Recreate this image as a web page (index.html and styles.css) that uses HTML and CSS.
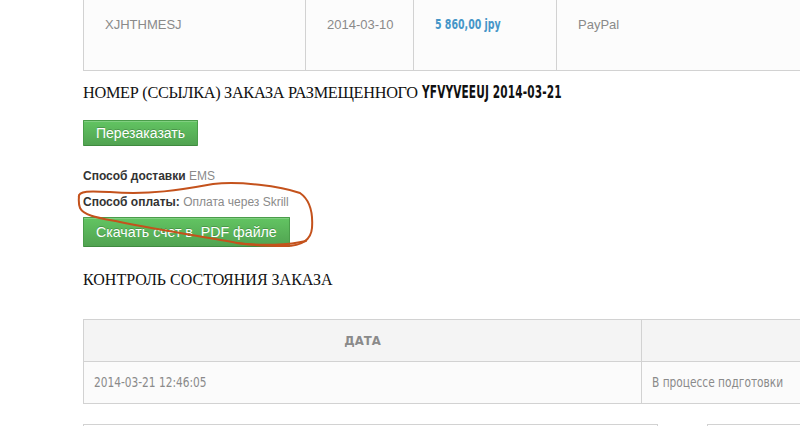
FILE: index.html
```html
<!DOCTYPE html>
<html lang="ru">
<head>
<meta charset="utf-8">
<link rel="stylesheet" href="styles.css">
</head>
<body>
<div class="page">
  <table class="orders">
    <tr>
      <td class="c-num">XJHTHMESJ</td>
      <td class="c-date">2014-03-10</td>
      <td class="c-sum"><span class="price">5 860,00 jpy</span></td>
      <td class="c-pay">PayPal</td>
    </tr>
  </table>

  <h2 class="title">НОМЕР (ССЫЛКА) ЗАКАЗА РАЗМЕЩЕННОГО <span class="code">YFVYVEEUJ 2014-03-21</span></h2>

  <div class="btn-row"><a class="btn btn-small">Перезаказать</a></div>

  <p class="info first"><b>Способ доставки</b> <span>EMS</span></p>
  <p class="info"><b>Способ оплаты:</b> <span>Оплата через Skrill</span></p>
  <div class="btn-row"><a class="btn btn-big">Скачать счет в&nbsp; PDF файле</a></div>

  <h2 class="title2">КОНТРОЛЬ СОСТОЯНИЯ ЗАКАЗА</h2>

  <table class="status">
    <tr class="head">
      <th class="s-date"><span class="th-text">ДАТА</span></th>
      <th class="s-state"></th>
    </tr>
    <tr>
      <td><span class="cell-text">2014-03-21 12:46:05</span></td>
      <td><span class="cell-text">В процессе подготовки</span></td>
    </tr>
  </table>

  <div class="bottom">
    <div class="box box-a"></div>
    <div class="box box-b"></div>
  </div>
</div>

<svg class="scribble" width="800" height="426" viewBox="0 0 800 426">
  <path d="M79,198 C77,190 92,191 110,192 C150,195 180,190 213,184 C240,181 280,186 300,193 C310,200 313,214 312,228 C311,240 302,246 285,246 C265,246 250,245 237,243 C205,237 165,231 120,222 C100,218 84,216 80,208 C78,203 79,198 79,195"
        fill="none" stroke="#c4521c" stroke-width="2" stroke-linecap="round" stroke-linejoin="round"/>
  <path d="M237,243 C260,246 290,245 306,241" fill="none" stroke="#c4521c" stroke-width="2" stroke-linecap="round"/>
</svg>
</body>
</html>
```

FILE: styles.css
```css
html, body {
  margin: 0;
  padding: 0;
  background: #ffffff;
}

body {
  width: 800px;
  height: 426px;
  overflow: hidden;
  position: relative;
  font-family: "Liberation Sans", Arial, sans-serif;
  font-size: 12px;
  color: #333;
}

.page {
  width: 800px;
  height: 426px;
  box-sizing: border-box;
  overflow: hidden;
  padding-left: 83px;
}

.orders {
  border-collapse: collapse;
  width: 717px;
  background: #fcfcfc;
  table-layout: fixed;
}

.orders td {
  border-left: 1px solid #d2d2d2;
  border-bottom: 1px solid #d2d2d2;
  padding: 16px 0 37px 21px;
  font-size: 13px;
  color: #8a8a8a;
  vertical-align: top;
  height: 17px;
  line-height: 17px;
  white-space: nowrap;
  overflow: hidden;
}

.orders .c-num { width: 200px; }
.orders .c-date { width: 86px; }
.orders .c-sum { width: 121px; }

.price {
  display: inline-block;
  font-family: "DejaVu Sans Condensed", sans-serif;
  font-weight: bold;
  color: #4596c8;
  font-size: 14px;
  transform: scaleX(0.75);
  transform-origin: left center;
}

.title {
  margin: 11px 0 0 0;
  font-family: "Liberation Serif", "Times New Roman", serif;
  font-weight: normal;
  font-size: 16.3px;
  line-height: 20px;
  color: #111;
  letter-spacing: -0.3px;
  white-space: nowrap;
}

.title .code {
  display: inline-block;
  font-family: "DejaVu Sans Condensed", sans-serif;
  font-weight: bold;
  font-size: 17px;
  letter-spacing: 0.2px;
  transform: scaleX(0.69);
  transform-origin: left center;
}

.btn-row {
  display: flex;
}

.btn {
  display: block;
  color: #fff;
  background: linear-gradient(#62c462, #51a351);
  border: 1px solid #4a9d4a;
  border-bottom-color: #3f8a3f;
  border-radius: 1px;
  text-shadow: 0 -1px 0 rgba(0,0,0,0.2);
  box-shadow: inset 0 1px 0 rgba(255,255,255,0.2);
  cursor: pointer;
  white-space: nowrap;
}

.btn-small {
  margin-top: 17px;
  height: 24px;
  line-height: 24px;
  padding: 0 12px;
  font-size: 14px;
}

.btn-big {
  height: 28px;
  line-height: 28px;
  padding: 0 12px;
  font-size: 14.2px;
}

.info {
  margin: 0;
  font-size: 12px;
  line-height: 14px;
  color: #333;
}

.info b {
  font-weight: bold;
}

.info span {
  color: #8a8a8a;
}

.info.first {
  margin-top: 23px;
}

.info + .info {
  margin-top: 12px;
}

.info + .btn-row {
  margin-top: 8px;
}

.title2 {
  margin: 23px 0 0 0;
  font-family: "Liberation Serif", "Times New Roman", serif;
  font-weight: normal;
  font-size: 16px;
  line-height: 20px;
  color: #111;
  letter-spacing: 0;
}

.status {
  margin-top: 29px;
  border-collapse: collapse;
  width: 730px;
  table-layout: fixed;
}

.status th, .status td {
  border: 1px solid #d2d2d2;
  height: 42px;
  padding: 0 10px;
  box-sizing: border-box;
}

.status .s-date {
  width: 558px;
}

.status .head {
  background: #f4f4f4;
}

.status th {
  text-align: center;
}

.th-text {
  display: inline-block;
  font-family: "DejaVu Sans Condensed", sans-serif;
  font-weight: bold;
  font-size: 13px;
  color: #8a8a8a;
}

.status td {
  background: #fbfbfb;
  white-space: nowrap;
  overflow: hidden;
}

.cell-text {
  display: inline-block;
  font-family: "DejaVu Sans Condensed", sans-serif;
  font-size: 13.4px;
  color: #8a8a8a;
  transform: scaleX(0.88);
  transform-origin: left center;
}

.bottom {
  display: flex;
  gap: 49px;
  margin-top: 20px;
}

.box {
  height: 30px;
  border: 1px solid #d2d2d2;
  box-sizing: border-box;
  flex: none;
}

.box-a { width: 575px; }
.box-b { width: 200px; }

.scribble {
  position: absolute;
  left: 0;
  top: 0;
  pointer-events: none;
}
```
